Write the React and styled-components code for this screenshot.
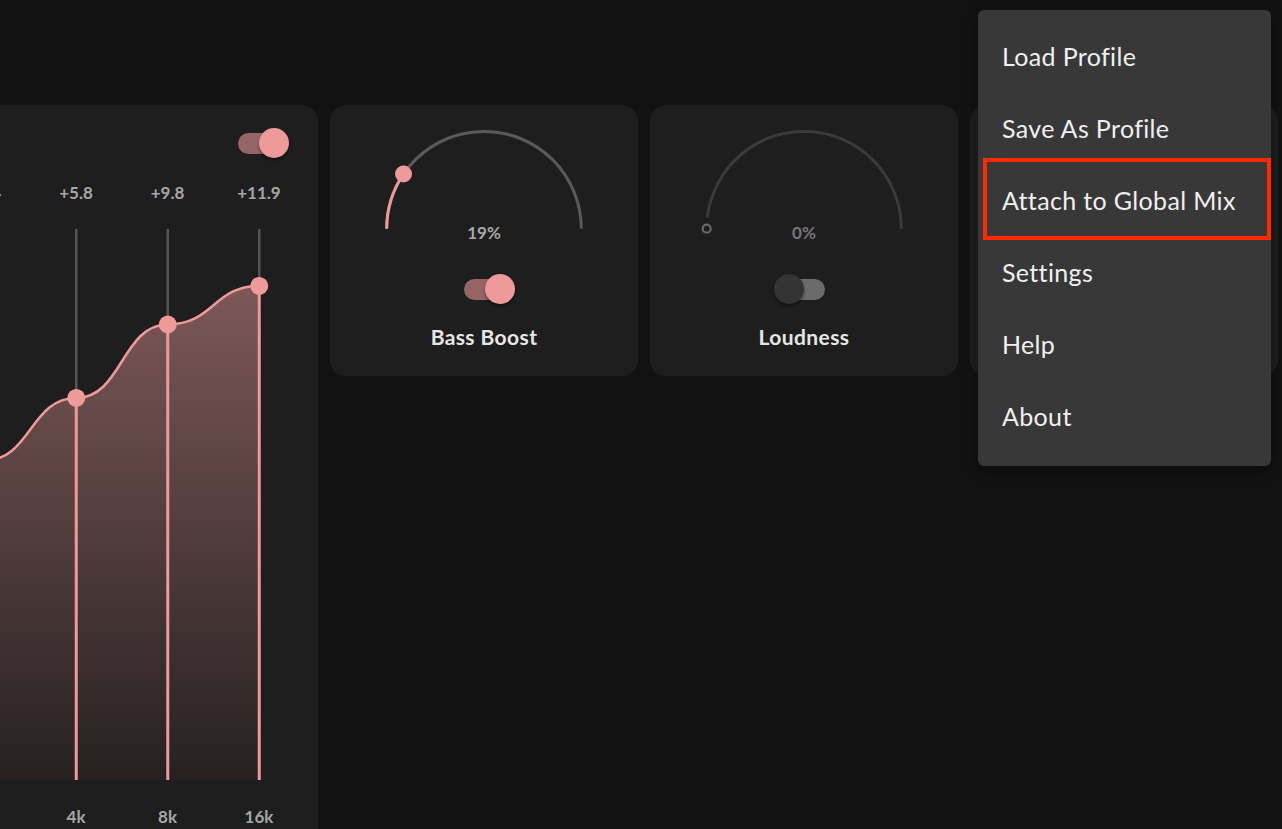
import React from 'react'
import styled, { createGlobalStyle } from 'styled-components'

const GlobalStyle = createGlobalStyle`
    html, body {
        margin: 0;
        padding: 0;
        background: #121212;
        overflow: hidden;
    }
    body {
        font-family: Lato, "Noto Sans", "Liberation Sans", sans-serif;
    }
`

const PINK = '#ef9a9a'

const Page = styled.div`
    position: relative;
    width: 100vw;
    height: 100vh;
    overflow: hidden;
    background: #121212;
    padding-top: 105px;
    box-sizing: border-box;
`
const Row = styled.div`
    display: flex;
    align-items: flex-start;
    gap: 12px;
    margin-left: -650.25px;
`
const Card = styled.div`
    background: #1e1e1e;
    border-radius: 16px;
    flex: none;
`
const EqCard = styled(Card)`
    width: 968.25px;
    box-sizing: border-box;
    padding: 23px 13.25px 20px 40px;
    display: flex;
    flex-direction: column;
`
const EqHeader = styled.div`
    display: flex;
    justify-content: flex-end;
    padding-right: 16px;
`
const BandRow = styled.div`
    display: grid;
    grid-template-columns: repeat(10, 91.5px);
    margin-top: ${p => p.$top}px;
`
const BandLabel = styled.div`
    text-align: center;
    font-size: 17px;
    line-height: 20px;
    font-weight: 700;
    color: #a6a6a6;
`
const Chart = styled.svg`
    display: block;
    margin-top: 17px;
`
const Switch = styled.span`
    position: relative;
    display: inline-block;
    width: 61px;
    height: 30px;
    flex: none;
    &::before {
        content: '';
        position: absolute;
        left: 10px;
        right: 10px;
        top: 5px;
        height: 21px;
        border-radius: 11px;
        background: ${p => p.$on ? 'rgba(239,154,154,0.58)' : '#6b6b6b'};
    }
    &::after {
        content: '';
        position: absolute;
        top: 0;
        left: ${p => p.$on ? 31 : 0}px;
        width: 30px;
        height: 30px;
        border-radius: 50%;
        background: ${p => p.$on ? PINK : '#343434'};
        box-shadow: 0 2px 3px rgba(0,0,0,0.45);
    }
`
const KnobCard = styled(Card)`
    width: 308px;
    height: 271px;
    box-sizing: border-box;
    padding-top: 20px;
    display: flex;
    flex-direction: column;
    align-items: center;
`
const KnobWrap = styled.div`
    position: relative;
    width: 220px;
    height: 115px;
`
const Percent = styled.div`
    position: absolute;
    left: 0;
    right: 0;
    top: 98px;
    text-align: center;
    font-size: 17px;
    line-height: 20px;
    font-weight: 700;
    color: ${p => p.$on ? '#a8a8a8' : '#767676'};
`
const SwitchSlot = styled.div`
    margin-top: 34px;
    display: flex;
    justify-content: center;
`
const KnobTitle = styled.div`
    margin-top: 21px;
    font-size: 21px;
    line-height: 24px;
    font-weight: 700;
    letter-spacing: 0.4px;
    color: #e6e6e6;
`
const Menu = styled.div`
    position: absolute;
    top: 10px;
    right: 11px;
    width: 293px;
    padding: 12px 0;
    background: #383838;
    border-radius: 6px;
    box-shadow: 0 5px 14px rgba(0,0,0,0.35);
`
const MenuItem = styled.div`
    height: 72px;
    box-sizing: border-box;
    padding: 0 0 4px 24px;
    display: flex;
    align-items: center;
    font-size: 25px;
    letter-spacing: 0.35px;
    color: #f0f0f0;
`
const Highlight = styled.div`
    position: absolute;
    top: 148px;
    left: 5px;
    width: 288px;
    height: 82px;
    box-sizing: border-box;
    border: 4px solid #ff2a00;
    pointer-events: none;
`

const bands = [
    {f: '31', v: -1.9},
    {f: '62', v: -0.6},
    {f: '125', v: 0.8},
    {f: '250', v: 1.5},
    {f: '500', v: 0.9},
    {f: '1k', v: 1.4},
    {f: '2k', v: 2.4},
    {f: '4k', v: 5.8},
    {f: '8k', v: 9.8},
    {f: '16k', v: 11.9},
]

const COL = 91.5
const TOP = 9
const BOTTOM = 560
const xOf = i => COL / 2 + COL * i
const yOf = v => TOP + (15 - v) / 30 * (BOTTOM - TOP)
const fmt = v => (v >= 0 ? '+' : '') + v.toFixed(1)

function EqChart(){
    const pts = bands.map((b, i) => [xOf(i), yOf(b.v)])
    let curve = `M${pts[0][0]},${pts[0][1]}`
    for(let i = 1; i < pts.length; i++){
        const [px, py] = pts[i-1]
        const [x, y] = pts[i]
        curve += ` C${px + COL/2},${py} ${x - COL/2},${y} ${x},${y}`
    }
    const last = pts[pts.length-1]
    const fill = `${curve} L${last[0]},${BOTTOM} L${pts[0][0]},${BOTTOM} Z`
    return (
        <Chart width={COL * 10} height={569}>
            <defs>
                <linearGradient id="eqfill" gradientUnits="userSpaceOnUse" x1="0" y1={yOf(11.9)} x2="0" y2={BOTTOM}>
                    <stop offset="0" stopColor="#7c5857"/>
                    <stop offset="1" stopColor="#262121"/>
                </linearGradient>
            </defs>
            {pts.map(([x, y], i) =>
                <line key={'g'+i} x1={x} y1={TOP} x2={x} y2={y} stroke="#555" strokeWidth="2.5"/>)}
            <path d={fill} fill="url(#eqfill)"/>
            {pts.map(([x, y], i) =>
                <line key={'p'+i} x1={x} y1={y} x2={x} y2={BOTTOM} stroke={PINK} strokeWidth="3"/>)}
            <path d={curve} fill="none" stroke={PINK} strokeWidth="2.5"/>
            {pts.map(([x, y], i) =>
                <circle key={'c'+i} cx={x} cy={y} r="9" fill={PINK}/>)}
        </Chart>
    )
}

function Knob({value, on}){
    const cx = 110, cy = 103.7, r = 97.3
    const a = Math.PI * (1 - value / 100)
    const px = cx + r * Math.cos(a)
    const py = cy - r * Math.sin(a)
    const startA = on ? Math.PI : Math.PI - 0.115
    const sx = cx + r * Math.cos(startA)
    const sy = cy - r * Math.sin(startA)
    return (
        <svg width="220" height="115">
            <path d={`M${sx},${sy} A${r},${r} 0 0 1 ${cx + r},${cy}`}
                fill="none" stroke={on ? '#5a5a5a' : '#3b3b3b'} strokeWidth="3"/>
            {on && <path d={`M${cx - r},${cy} A${r},${r} 0 0 1 ${px},${py}`}
                fill="none" stroke={PINK} strokeWidth="3"/>}
            {on
                ? <circle cx={px} cy={py} r="8.5" fill={PINK}/>
                : <circle cx={cx - r} cy={cy} r="4" fill="none" stroke="#696969" strokeWidth="2.2"/>}
        </svg>
    )
}

function EffectCard({title, value, on}){
    return (
        <KnobCard>
            <KnobWrap>
                <Knob value={value} on={on}/>
                <Percent $on={on}>{value}%</Percent>
            </KnobWrap>
            <SwitchSlot><Switch $on={on}/></SwitchSlot>
            <KnobTitle>{title}</KnobTitle>
        </KnobCard>
    )
}

const menuItems = ['Load Profile', 'Save As Profile', 'Attach to Global Mix', 'Settings', 'Help', 'About']

function App(){
    return (
        <Page>
            <GlobalStyle/>
            <Row>
                <EqCard>
                    <EqHeader><Switch $on/></EqHeader>
                    <BandRow $top={25}>
                        {bands.map(b => <BandLabel key={b.f}>{fmt(b.v)}</BandLabel>)}
                    </BandRow>
                    <EqChart/>
                    <BandRow $top={18}>
                        {bands.map(b => <BandLabel key={b.f}>{b.f}</BandLabel>)}
                    </BandRow>
                </EqCard>
                <EffectCard title="Bass Boost" value={19} on/>
                <EffectCard title="Loudness" value={0}/>
                <EffectCard title="Virtualizer" value={0}/>
            </Row>
            <Menu>
                {menuItems.map(item => <MenuItem key={item}>{item}</MenuItem>)}
                <Highlight/>
            </Menu>
        </Page>
    )
}

export default App
